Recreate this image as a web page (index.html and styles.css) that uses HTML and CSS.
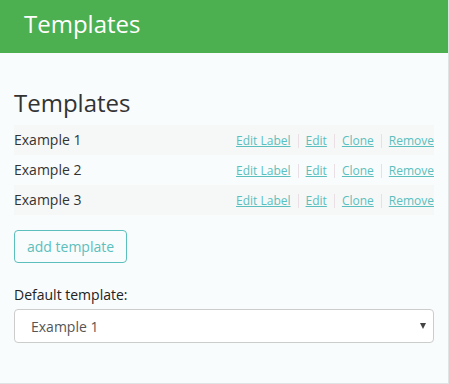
FILE: index.html
```html
<!DOCTYPE html>
<html>
<head>
<meta charset="utf-8">
<link rel="stylesheet" href="styles.css">
</head>
<body>
<div class="panel">
  <div class="header">Templates</div>
  <div class="content">
    <h2 class="title">Templates</h2>
    <div class="list">
      <div class="row odd">
        <span class="name">Example 1</span>
        <span class="actions"><a href="#">Edit Label</a><span class="sep"></span><a href="#">Edit</a><span class="sep"></span><a href="#">Clone</a><span class="sep"></span><a href="#">Remove</a></span>
      </div>
      <div class="row">
        <span class="name">Example 2</span>
        <span class="actions"><a href="#">Edit Label</a><span class="sep"></span><a href="#">Edit</a><span class="sep"></span><a href="#">Clone</a><span class="sep"></span><a href="#">Remove</a></span>
      </div>
      <div class="row odd">
        <span class="name">Example 3</span>
        <span class="actions"><a href="#">Edit Label</a><span class="sep"></span><a href="#">Edit</a><span class="sep"></span><a href="#">Clone</a><span class="sep"></span><a href="#">Remove</a></span>
      </div>
    </div>
    <button class="add-btn">add template</button>
    <div class="label">Default template:</div>
    <div class="select">
      <span>Example 1</span>
      <span class="arrow"></span>
    </div>
  </div>
</div>
</body>
</html>
```
FILE: styles.css
```css
html, body {
  margin: 0;
  padding: 0;
  background: #ffffff;
}
body {
  font-family: "Open Sans", "Liberation Sans", sans-serif;
  color: #333;
}
.panel {
  width: 448px;
  height: 383px;
  border-right: 1px solid #dfe3e3;
  border-bottom: 1px solid #dfe3e3;
  background: #f9fcfc;
  display: flex;
  flex-direction: column;
}
.header {
  background: #4caf50;
  color: #fff;
  height: 53px;
  box-sizing: border-box;
  padding: 8px 0 0 24px;
  font-size: 24px;
  line-height: 32px;
}
.content {
  padding: 34px 14px 0 14px;
  display: flex;
  flex-direction: column;
  align-items: flex-start;
}
.title {
  margin: 0 0 6px 0;
  font-size: 24px;
  font-weight: normal;
  line-height: 32px;
  color: #333;
}
.list {
  align-self: stretch;
  display: flex;
  flex-direction: column;
}
.row {
  display: flex;
  justify-content: space-between;
  align-items: center;
  height: 30px;
  font-size: 14px;
  line-height: 20px;
}
.row.odd {
  background: #f6f8f8;
}
.actions {
  display: flex;
  align-items: center;
  font-size: 12px;
  line-height: 20px;
  padding-top: 2px;
}
.actions a {
  color: #5bbfbd;
  text-decoration: underline;
}
.sep {
  width: 1px;
  height: 14px;
  background: #eadfe4;
  margin: 0 7px;
}
.add-btn {
  margin-top: 15px;
  font-family: "Open Sans", "Liberation Sans", sans-serif;
  font-size: 14px;
  line-height: 19px;
  padding: 6px 12px;
  color: #5bbfbd;
  background: transparent;
  border: 1px solid #5bbfbd;
  border-radius: 4px;
}
.label {
  margin-top: 22px;
  font-size: 14px;
  line-height: 20px;
  color: #222;
}
.select {
  margin-top: 4px;
  align-self: stretch;
  height: 34px;
  box-sizing: border-box;
  border: 1px solid #cccccc;
  border-radius: 4px;
  background: #fff;
  display: flex;
  align-items: center;
  justify-content: space-between;
  padding: 0 7px 0 16px;
  font-size: 14px;
  color: #555;
}
.arrow {
  width: 0;
  height: 0;
  border-left: 3.5px solid transparent;
  border-right: 3.5px solid transparent;
  border-top: 6px solid #444;
}
```
